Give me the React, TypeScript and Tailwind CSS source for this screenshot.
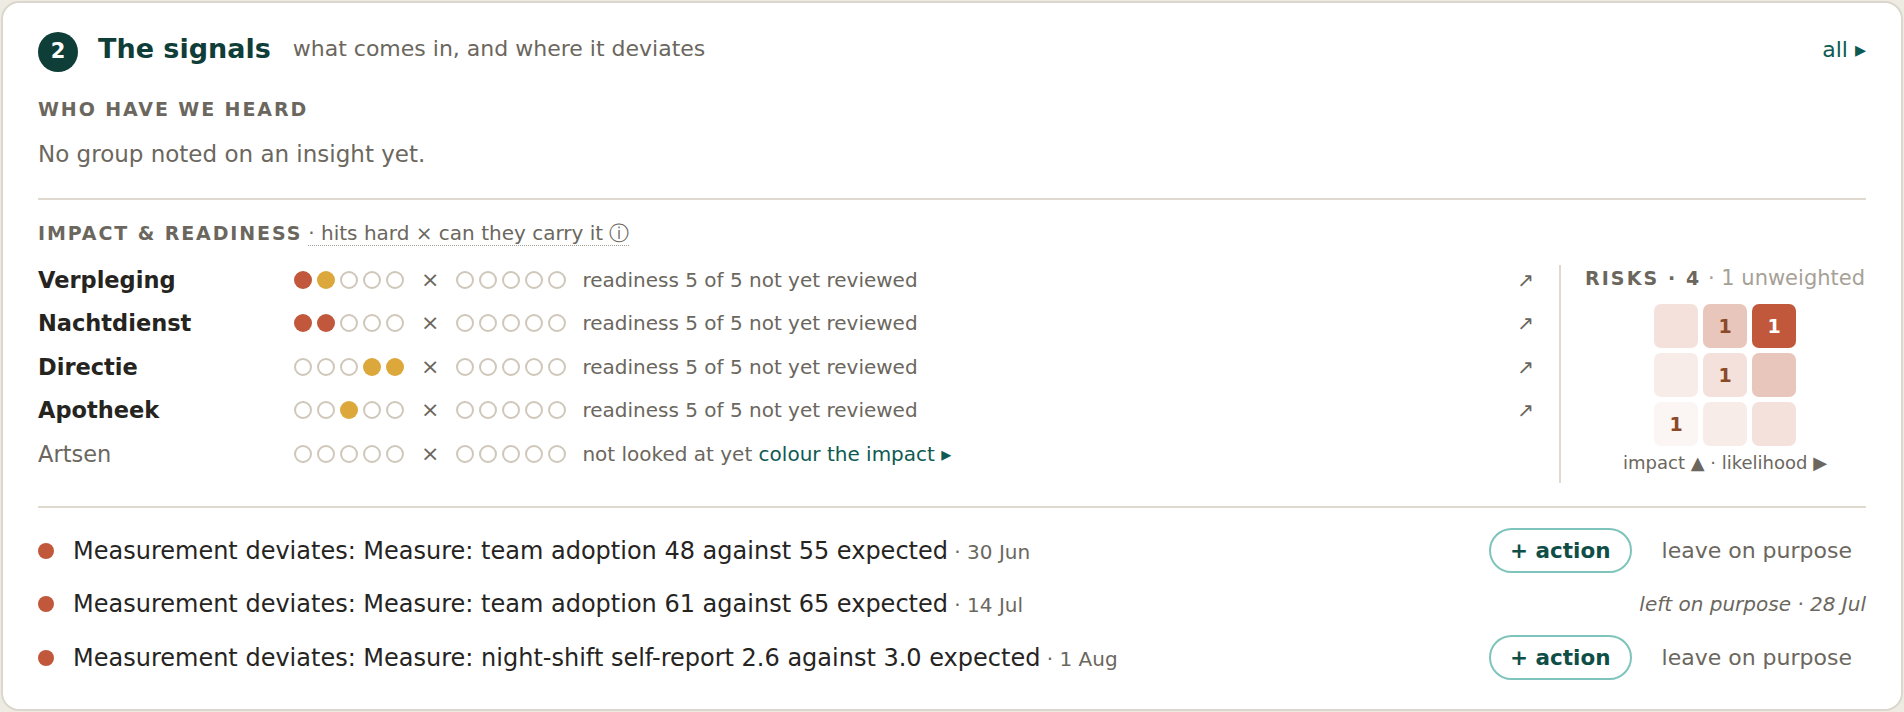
import React from 'react';

type Dot = 'r' | 'a' | null;

const GROUPS: { name: string; impact: Dot[]; reviewed: boolean }[] = [
  { name: 'Verpleging', impact: ['r', 'a', null, null, null], reviewed: true },
  { name: 'Nachtdienst', impact: ['r', 'r', null, null, null], reviewed: true },
  { name: 'Directie', impact: [null, null, null, 'a', 'a'], reviewed: true },
  { name: 'Apotheek', impact: [null, null, 'a', null, null], reviewed: true },
  { name: 'Artsen', impact: [null, null, null, null, null], reviewed: false },
];

// impact rows top to bottom, likelihood left to right
const RISK_CELLS: { bg: string; n?: string; strong?: boolean }[] = [
  { bg: 'bg-[#f4e1db]' },
  { bg: 'bg-[#e9c6bc]', n: '1' },
  { bg: 'bg-[#c1573b]', n: '1', strong: true },
  { bg: 'bg-[#f8ece9]' },
  { bg: 'bg-[#f4e1db]', n: '1' },
  { bg: 'bg-[#e9c6bc]' },
  { bg: 'bg-[#fbf5f3]', n: '1' },
  { bg: 'bg-[#f8ece9]' },
  { bg: 'bg-[#f4e1db]' },
];

const SIGNALS = [
  { text: 'Measurement deviates: Measure: team adoption 48 against 55 expected', date: '30 Jun', left: null },
  { text: 'Measurement deviates: Measure: team adoption 61 against 65 expected', date: '14 Jul', left: '28 Jul' },
  { text: 'Measurement deviates: Measure: night-shift self-report 2.6 against 3.0 expected', date: '1 Aug', left: null },
];

const Dots: React.FC<{ values: Dot[] }> = ({ values }) => (
  <div className="flex gap-[5px]">
    {values.map((v, i) => (
      <span
        key={i}
        className={`h-[18px] w-[18px] rounded-full ${
          v === 'r' ? 'bg-[#c1573b]' : v === 'a' ? 'bg-[#dca73b]' : 'border-2 border-[#cfc7b9]'
        }`}
      />
    ))}
  </div>
);

const App: React.FC = () => {
  return (
    <div className="h-[712px] w-full bg-[#eeebe3] p-px font-['DejaVu_Sans',sans-serif]">
      <div className="h-full rounded-[18px] border-2 border-[#dcd7cc] bg-white px-[35px] pt-[29px]">
        {/* Header */}
        <div className="flex h-[40px] items-center">
          <span className="flex h-[40px] w-[40px] items-center justify-center rounded-full bg-[#0f3d38] text-[21px] font-bold text-white">
            2
          </span>
          <h2 className="mb-[7px] ml-[20px] text-[27px] font-bold leading-none text-[#0f3d38]">The signals</h2>
          <span className="mb-[7px] ml-[22px] text-[22px] leading-none text-[#6b675e]">
            what comes in, and where it deviates
          </span>
          <a className="mb-[5px] ml-auto text-[22px] leading-none text-[#0e5a52]">all ▸</a>
        </div>

        {/* Who have we heard */}
        <h3 className="mt-[25px] text-[19px] font-bold uppercase leading-[24px] tracking-[0.1em] text-[#6b675e]">
          Who have we heard
        </h3>
        <p className="mt-[18px] text-[23px] leading-[30px] text-[#6b675e]">No group noted on an insight yet.</p>

        <div className="mt-[29px] h-[2px] bg-[#dedad0]" />

        {/* Impact & readiness */}
        <div className="mt-[21px] flex items-baseline">
          <span className="text-[19px] font-bold uppercase leading-[24px] tracking-[0.1em] text-[#6b675e]">
            Impact &amp; readiness
          </span>
          <span className="ml-[6px] inline-block border-b border-dotted border-[#a6a197] text-[20px] leading-[24px] text-[#6b675e]">
            · hits hard × can they carry it ⓘ
          </span>
        </div>

        <div className="mt-[12px] flex items-start">
          <div className="flex flex-1 flex-col">
            {GROUPS.map((g) => (
              <div key={g.name} className="flex h-[43.5px] items-center">
                <span
                  className={`w-[256px] text-[22.5px] leading-none ${
                    g.reviewed ? 'font-bold text-[#26241f]' : 'text-[#6b675e]'
                  }`}
                >
                  {g.name}
                </span>
                <Dots values={g.impact} />
                <span className="mx-[17px] text-[22px] leading-none text-[#6b675e]">×</span>
                <Dots values={[null, null, null, null, null]} />
                <span className="ml-[16px] text-[20px] leading-none text-[#6b675e]">
                  {g.reviewed ? (
                    'readiness 5 of 5 not yet reviewed'
                  ) : (
                    <>
                      not looked at yet <a className="text-[#0e5a52]">colour the impact ▸</a>
                    </>
                  )}
                </span>
                {g.reviewed && <span className="ml-auto text-[20px] leading-none text-[#6b675e]">↗</span>}
              </div>
            ))}
          </div>

          {/* Risk matrix */}
          <div className="ml-[25px] mt-[7px] flex h-[218px] w-[307px] flex-col items-center border-l-2 border-[#dedad0] pl-[23px] pt-[1px]">
            <div className="whitespace-nowrap leading-[24px]">
              <span className="text-[19px] font-bold tracking-[0.11em] text-[#6b675e]">RISKS · 4</span>
              <span className="text-[21px] text-[#a6a197]"> · 1 unweighted</span>
            </div>
            <div className="mt-[12px] grid grid-cols-[repeat(3,44px)] gap-[5px]">
              {RISK_CELLS.map((c, i) => (
                <div
                  key={i}
                  className={`flex h-[44px] items-center justify-center rounded-[7px] text-[19px] font-bold ${c.bg} ${
                    c.strong ? 'text-white' : 'text-[#8b4a27]'
                  }`}
                >
                  {c.n}
                </div>
              ))}
            </div>
            <div className="mt-[6px] whitespace-nowrap text-[18px] leading-[22px] text-[#6b675e]">
              impact ▲ · likelihood ▶
            </div>
          </div>
        </div>

        <div className="mt-[23px] h-[2px] bg-[#dedad0]" />

        {/* Deviations */}
        <div className="mt-[16px] flex flex-col">
          {SIGNALS.map((s, i) => (
            <div key={i} className="flex h-[53.5px] items-center">
              <span className="h-4 w-4 shrink-0 rounded-full bg-[#c1573b]" />
              <span className="ml-[19px] text-[24px] leading-none text-[#26241f]">
                {s.text}
                <span className="text-[20px] text-[#6b675e]"> · {s.date}</span>
              </span>
              <div className="ml-auto flex items-center">
                {s.left ? (
                  <span className="text-[20px] italic leading-none text-[#6b675e]">left on purpose · {s.left}</span>
                ) : (
                  <>
                    <button className="h-[45px] rounded-full border-2 border-[#7fc4bc] px-[19px] text-[21.5px] font-bold leading-none text-[#0f4e47]">
                      + action
                    </button>
                    <button className="ml-[16px] px-[14px] text-[22px] leading-none text-[#6b675e]">
                      leave on purpose
                    </button>
                  </>
                )}
              </div>
            </div>
          ))}
        </div>
      </div>
    </div>
  );
};

export default App;
